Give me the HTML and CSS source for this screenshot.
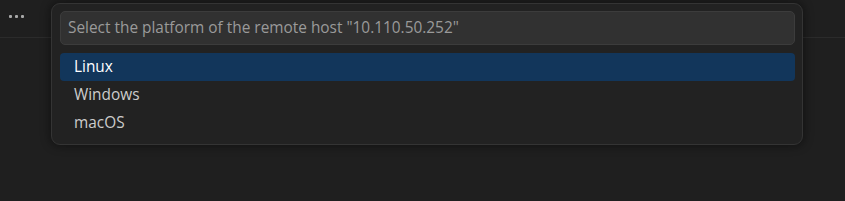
FILE: index.html
```html
<!DOCTYPE html>
<html>
<head>
<meta charset="utf-8">
<link rel="stylesheet" href="styles.css">
</head>
<body>
<div class="topbar">
  <div class="more"><span></span><span></span><span></span></div>
</div>
<div class="quick">
  <div class="input">Select the platform of the remote host "10.110.50.252"</div>
  <div class="list">
    <div class="row selected">Linux</div>
    <div class="row">Windows</div>
    <div class="row">macOS</div>
  </div>
</div>
</body>
</html>
```
FILE: styles.css
```css
html, body {
  margin: 0;
  padding: 0;
  background: #1f1f1f;
  width: 845px;
  height: 201px;
  overflow: hidden;
  font-family: "Open Sans", "Noto Sans", sans-serif;
}
.topbar {
  height: 38px;
  border-bottom: 1px solid #2b2b2b;
  box-sizing: border-box;
  display: flex;
  align-items: flex-start;
  padding: 15px 0 0 9px;
}
.more {
  display: flex;
  gap: 3px;
}
.more span {
  width: 3px;
  height: 3px;
  background: #a8a8a8;
  border-radius: 1px;
}
.quick {
  position: absolute;
  left: 51px;
  top: 3px;
  width: 752px;
  height: 142px;
  box-sizing: border-box;
  background: #222222;
  border: 1px solid #343434;
  border-radius: 9px;
  box-shadow: 0 0 8px 2px rgba(0,0,0,0.36);
  padding: 7px 7px 0 8px;
}
.input {
  height: 34px;
  box-sizing: border-box;
  background: #313131;
  border: 1px solid #3c3c3c;
  border-radius: 5px;
  color: #9a9a9a;
  font-size: 15.4px;
  line-height: 32px;
  padding-left: 7px;
  white-space: nowrap;
}
.list {
  margin-top: 8px;
}
.row {
  height: 28px;
  line-height: 28px;
  padding-left: 14px;
  color: #cccccc;
  font-size: 15.4px;
  border-radius: 4px;
}
.row.selected {
  background: #12365b;
  color: #ffffff;
}
```
